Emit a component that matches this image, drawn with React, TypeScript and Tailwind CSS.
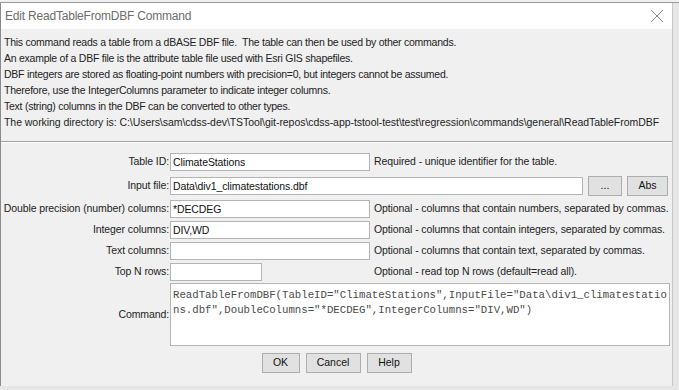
import React from "react";

const ui = { fontFamily: '"Liberation Sans", Arial, sans-serif' };
const mono = { fontFamily: '"Liberation Mono", "Courier New", monospace' };

function Label({ children }: { children: React.ReactNode }) {
  return (
    <div className="w-[169px] shrink-0 text-right pr-[1px] text-[10.5px] tracking-[-0.1px] text-[#222] whitespace-nowrap">
      {children}
    </div>
  );
}

function Field({ value, w }: { value?: string; w: string }) {
  return (
    <div
      className={`${w} h-[18px] shrink-0 bg-white border border-[#b4b4b4] px-[2px] flex items-center text-[10.5px] tracking-[-0.1px] text-[#111] leading-none`}
    >
      {value}
    </div>
  );
}

function Note({ children }: { children: React.ReactNode }) {
  return (
    <div className="ml-[4px] text-[10.5px] tracking-[-0.1px] text-[#222] whitespace-nowrap">{children}</div>
  );
}

function Btn({ children, w }: { children: React.ReactNode; w: string }) {
  return (
    <div
      className={`${w} h-[20px] bg-[#e1e1e1] border border-[#adadad] flex items-center justify-center text-[10.5px] text-[#111]`}
    >
      {children}
    </div>
  );
}

export default function App() {
  const lines = [
    "This command reads a table from a dBASE DBF file.  The table can then be used by other commands.",
    "An example of a DBF file is the attribute table file used with Esri GIS shapefiles.",
    "DBF integers are stored as floating-point numbers with precision=0, but integers cannot be assumed.",
    "Therefore, use the IntegerColumns parameter to indicate integer columns.",
    "Text (string) columns in the DBF can be converted to other types.",
  ];
  return (
    <div className="w-[679px] h-[390px] bg-[#e6e6e6] overflow-hidden" style={ui}>
      <div className="h-[3px] bg-[#f0f0f0] border-b border-[#9a9a9a]" />
      <div className="w-[673px] h-[383px] bg-[#f0f0f0] border-l border-[#8a8a8a] border-r border-r-[#c8c8c8] flex flex-col">
        <div className="h-[26px] bg-white flex items-center justify-between pl-[4px] pr-[8px]">
          <div className="text-[12px] tracking-[-0.2px] text-[#6d6d6d]">Edit ReadTableFromDBF Command</div>
          <svg width="14" height="14" viewBox="0 0 14 14">
            <path d="M1 1 L13 13 M13 1 L1 13" stroke="#8a8a8a" strokeWidth="1" fill="none" />
          </svg>
        </div>
        <div className="pt-[5px] pl-[3px]">
          {lines.map((l, i) => (
            <div
              key={i}
              className="h-[16px] leading-[16px] text-[10.5px] tracking-[-0.25px] text-[#222] whitespace-pre"
            >
              {l}
            </div>
          ))}
          <div className="h-[16px] leading-[16px] text-[10.5px] tracking-[-0.05px] text-[#222] whitespace-pre">
            The working directory is: C:\Users\sam\cdss-dev\TSTool\git-repos\cdss-app-tstool-test\test\regression\commands\general\ReadTableFromDBF
          </div>
        </div>
        <div className="mt-[11px] h-[2px] border-t border-[#a0a0a0] border-b border-b-white" />
        <div className="flex flex-col">
          <div className="mt-[10px] flex items-center h-[18px]">
            <Label>Table ID:</Label>
            <Field value="ClimateStations" w="w-[200px]" />
            <Note>Required - unique identifier for the table.</Note>
          </div>
          <div className="mt-[5px] flex items-center h-[20px]">
            <Label>Input file:</Label>
            <Field value="Data\div1_climatestations.dbf" w="w-[413px]" />
            <div className="ml-[5px]">
              <Btn w="w-[34px]">...</Btn>
            </div>
            <div className="ml-[5px]">
              <Btn w="w-[41px]">Abs</Btn>
            </div>
          </div>
          <div className="mt-[4px] flex items-center h-[18px]">
            <Label>Double precision (number) columns:</Label>
            <Field value="*DECDEG" w="w-[200px]" />
            <Note>Optional - columns that contain numbers, separated by commas.</Note>
          </div>
          <div className="mt-[3px] flex items-center h-[18px]">
            <Label>Integer columns:</Label>
            <Field value="DIV,WD" w="w-[200px]" />
            <Note>Optional - columns that contain integers, separated by commas.</Note>
          </div>
          <div className="mt-[3px] flex items-center h-[18px]">
            <Label>Text columns:</Label>
            <Field w="w-[200px]" />
            <Note>Optional - columns that contain text, separated by commas.</Note>
          </div>
          <div className="mt-[3px] flex items-center h-[18px]">
            <Label>Top N rows:</Label>
            <Field w="w-[92px]" />
            <div className="ml-[108px]">
              <Note>Optional - read top N rows (default=read all).</Note>
            </div>
          </div>
          <div className="mt-[2px] flex items-center h-[63px]">
            <Label>Command:</Label>
            <div
              className="w-[500px] h-[63px] bg-white border border-[#b4b4b4] pl-[2px] pt-[4px] text-[10.7px] leading-[15px] text-[#4a4a4a] whitespace-pre"
              style={mono}
            >
              <div>ReadTableFromDBF(TableID="ClimateStations",InputFile="Data\div1_climatestatio</div>
              <div>ns.dbf",DoubleColumns="*DECDEG",IntegerColumns="DIV,WD")</div>
            </div>
          </div>
          <div className="mt-[7px] flex justify-center gap-[6px]">
            <Btn w="w-[38px]">OK</Btn>
            <Btn w="w-[55px]">Cancel</Btn>
            <Btn w="w-[45px]">Help</Btn>
          </div>
        </div>
      </div>
    </div>
  );
}
